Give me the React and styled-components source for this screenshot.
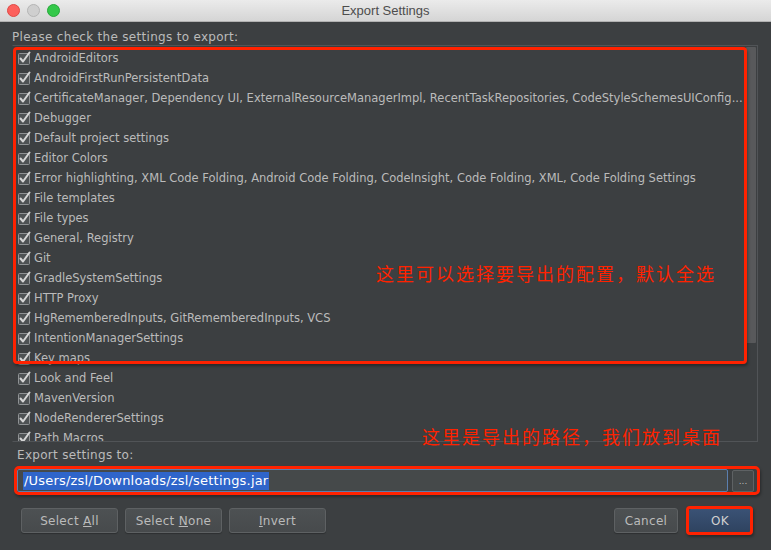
import styled, { createGlobalStyle } from 'styled-components'

const GlobalStyle = createGlobalStyle`
    html, body {
        margin: 0;
        padding: 0;
        background: #3c3f41;
    }
    * {
        box-sizing: border-box;
    }
`

const settings = [
    'AndroidEditors',
    'AndroidFirstRunPersistentData',
    'CertificateManager, Dependency UI, ExternalResourceManagerImpl, RecentTaskRepositories, CodeStyleSchemesUIConfig...',
    'Debugger',
    'Default project settings',
    'Editor Colors',
    'Error highlighting, XML Code Folding, Android Code Folding, CodeInsight, Code Folding, XML, Code Folding Settings',
    'File templates',
    'File types',
    'General, Registry',
    'Git',
    'GradleSystemSettings',
    'HTTP Proxy',
    'HgRememberedInputs, GitRememberedInputs, VCS',
    'IntentionManagerSettings',
    'Key maps',
    'Look and Feel',
    'MavenVersion',
    'NodeRendererSettings',
    'Path Macros',
    'Project Default',
]

const CheckIcon = () => (
    <svg width="14" height="14" viewBox="0 0 14 14">
        <rect x="1.5" y="2.5" width="11" height="11" rx="1" fill="#4e5254" stroke="#8f9294" />
        <path d="M3.5 7.5 L6 10.5 L12.5 1.5" fill="none" stroke="#d6d6d6" strokeWidth="2" strokeLinecap="round" strokeLinejoin="round" />
    </svg>
)

const App = () => {
    return (
        <Window>
            <GlobalStyle />
            <TitleBar>
                <Lights>
                    <Light color="#fc605c" border="#de4a46" />
                    <Light color="#cfcfcf" border="#b5b5b5" />
                    <Light color="#34c84a" border="#27a83a" />
                </Lights>
                <Title>Export Settings</Title>
            </TitleBar>
            <Body>
                <Label>Please check the settings to export:</Label>
                <ListBox>
                    <Rows>
                        {settings.map(name => (
                            <Row key={name}>
                                <CheckIcon />
                                <RowText>{name}</RowText>
                            </Row>
                        ))}
                    </Rows>
                    <Scrollbar>
                        <Thumb />
                    </Scrollbar>
                    <ListMark>
                        <Note>这里可以选择要导出的配置，默认全选</Note>
                    </ListMark>
                    <PathNote>这里是导出的路径，我们放到桌面</PathNote>
                </ListBox>
                <ExportLabel>Export settings to:</ExportLabel>
                <PathRow>
                    <Field>
                        <Selected>/Users/zsl/Downloads/zsl/settings.jar</Selected>
                    </Field>
                    <BrowseButton>...</BrowseButton>
                    <PathMark />
                </PathRow>
                <Buttons>
                    <Button><span>Select <u>A</u>ll</span></Button>
                    <Button><span>Select <u>N</u>one</span></Button>
                    <Button><span><u>I</u>nvert</span></Button>
                    <Spacer />
                    <Button narrow>Cancel</Button>
                    <OkWrap>
                        <Button narrow primary>OK</Button>
                        <OkMark />
                    </OkWrap>
                </Buttons>
            </Body>
        </Window>
    )
}

const Window = styled.div`
    width: 771px;
    height: 550px;
    display: flex;
    flex-direction: column;
    background: #3c3f41;
    font-family: "DejaVu Sans", "Noto Sans CJK SC", sans-serif;
    overflow: hidden;
`

const TitleBar = styled.div`
    height: 22px;
    flex: none;
    position: relative;
    display: flex;
    align-items: center;
    justify-content: center;
    background: linear-gradient(#ebebeb, #d5d5d5);
    border-bottom: 1px solid #b1b1b1;
`

const Lights = styled.div`
    position: absolute;
    left: 7px;
    top: 4px;
    display: flex;
    gap: 7px;
`

const Light = styled.span`
    width: 13px;
    height: 13px;
    border-radius: 50%;
    background: ${p => p.color};
    border: 1px solid ${p => p.border};
`

const Title = styled.div`
    font-family: "Liberation Sans", Arial, sans-serif;
    font-size: 13px;
    color: #4d4d4d;
`

const Body = styled.div`
    flex: 1;
    display: flex;
    flex-direction: column;
    padding: 8px 12px 0 12px;
`

const Label = styled.div`
    font-size: 12px;
    color: #bbbbbb;
    line-height: 15px;
    letter-spacing: 0.3px;
`

const ListBox = styled.div`
    position: relative;
    height: 397px;
    margin-right: 1px;
    display: flex;
    border: 1px solid #515457;
    border-left-color: #3c3f41;
`

const Rows = styled.div`
    flex: 1;
    overflow: hidden;
    padding-top: 2px;
`

const Row = styled.div`
    height: 20px;
    display: flex;
    align-items: center;
    gap: 3px;
    padding-left: 4px;
`

const RowText = styled.span`
    font-size: 11.5px;
    color: #bbbbbb;
    white-space: nowrap;
`

const Scrollbar = styled.div`
    width: 11px;
    flex: none;
    padding: 1px 1px 0 0;
`

const Thumb = styled.div`
    height: 296px;
    background: #58595b;
    border-radius: 1px;
`

const ListMark = styled.div`
    position: absolute;
    left: 0;
    top: 1px;
    width: 734px;
    height: 317px;
    border: 3px solid #ff2200;
    border-radius: 4px;
    box-shadow: 1px 2px 3px rgba(0, 0, 0, 0.35);
`

const Note = styled.div`
    position: absolute;
    left: 360px;
    top: 210px;
    font-family: "Noto Sans CJK SC", sans-serif;
    font-size: 18px;
    letter-spacing: 2px;
    color: #ff2200;
    white-space: nowrap;
`

const PathNote = styled(Note)`
    left: 409px;
    top: 377px;
`

const ExportLabel = styled.div`
    margin: 6px 0 0 5px;
    font-size: 12px;
    line-height: 15px;
    color: #bbbbbb;
    letter-spacing: 0.3px;
`

const PathRow = styled.div`
    position: relative;
    display: flex;
    gap: 4px;
    margin: 6px 0 0 5px;
    width: 737px;
`

const Field = styled.div`
    flex: 1;
    height: 23px;
    background: #45494a;
    border: 1px solid #5b7faf;
    border-radius: 2px;
    padding: 2px 5px;
    display: flex;
    align-items: center;
`

const Selected = styled.span`
    background: #2f65ca;
    color: #ffffff;
    font-size: 13px;
    line-height: 18px;
    padding: 0 1px;
    letter-spacing: 0.2px;
`

const BrowseButton = styled.div`
    width: 22px;
    height: 22px;
    margin-top: 1px;
    background: #45494a;
    border: 1px solid #5e6264;
    border-radius: 2px;
    color: #bbbbbb;
    font-size: 9px;
    display: flex;
    align-items: center;
    justify-content: center;
`

const PathMark = styled.div`
    position: absolute;
    left: -3px;
    top: -3px;
    width: 746px;
    height: 29px;
    border: 3px solid #ff2200;
    border-radius: 5px;
    box-shadow: 1px 2px 3px rgba(0, 0, 0, 0.35);
`

const Buttons = styled.div`
    display: flex;
    align-items: center;
    gap: 7px;
    margin: 16px 0 0 9px;
    width: 731px;
`

const Spacer = styled.div`
    flex: 1;
`

const Button = styled.div`
    width: ${p => (p.narrow ? '64px' : '97px')};
    height: 25px;
    display: flex;
    align-items: center;
    justify-content: center;
    border-radius: 3px;
    font-size: 12px;
    letter-spacing: 0.3px;
    color: ${p => (p.primary ? '#d0d0d0' : '#bbbbbb')};
    background: ${p => (p.primary
        ? 'linear-gradient(#3a5275, #2f4360)'
        : 'linear-gradient(#4d5153, #474a4c)')};
    border: 1px solid ${p => (p.primary ? '#25354a' : '#5e6163')};
    box-shadow: 0 1px 1px rgba(0, 0, 0, 0.25);
`

const OkWrap = styled.div`
    position: relative;
    margin-left: 3px;
    display: flex;
`

const OkMark = styled.div`
    position: absolute;
    left: -2px;
    top: -2px;
    right: -1px;
    bottom: -2px;
    border: 3px solid #ff2200;
    border-radius: 4px;
    box-shadow: 1px 2px 3px rgba(0, 0, 0, 0.35);
`

export default App
